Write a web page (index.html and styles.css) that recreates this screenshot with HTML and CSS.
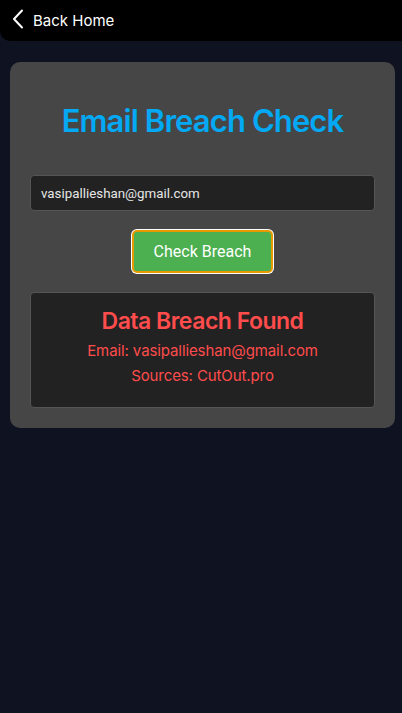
FILE: index.html
```html
<!DOCTYPE html>
<html lang="en">
<head>
<meta charset="utf-8">
<title>Email Breach Check</title>
<link rel="stylesheet" href="styles.css">
</head>
<body>
<header class="topbar">
  <a class="back" href="#">
    <svg class="chev" width="12" height="20" viewBox="0 0 12 20"><path d="M10 1.5 L2 10 L10 18.5" fill="none" stroke="#fff" stroke-width="2" stroke-linecap="round" stroke-linejoin="round"/></svg>
    <span>Back Home</span>
  </a>
</header>
<main class="card">
  <h1 class="title">Email Breach Check</h1>
  <input class="email" type="text" value="vasipallieshan@gmail.com">
  <div class="actions"><button class="check">Check Breach</button></div>
  <section class="result">
    <h2 class="result-title">Data Breach Found</h2>
    <p class="line">Email: vasipallieshan@gmail.com</p>
    <p class="line">Sources: CutOut.pro</p>
  </section>
</main>
</body>
</html>
```
FILE: styles.css
```css
html, body {
  margin: 0;
  padding: 0;
  background: #0f1321;
  height: 100%;
}
body {
  font-family: Inter, "Open Sans", sans-serif;
}
.topbar {
  background: #000;
  height: 41px;
  border-bottom-left-radius: 10px;
  display: flex;
  align-items: center;
  padding-left: 12px;
}
.back {
  display: flex;
  align-items: center;
  gap: 9px;
  color: #fff;
  text-decoration: none;
  font-size: 15px;
}
.chev { margin-top: -4px; }
.card {
  margin: 21px 7px 0 10px;
  background: #464646;
  border-radius: 10px;
  padding: 20px 20px 20px;
}
.title {
  margin: 19px 0 34px;
  text-align: center;
  color: #03a9f4;
  font-size: 31px;
  line-height: 40px;
  font-weight: 600;
  letter-spacing: -0.9px;
}
.email {
  display: block;
  box-sizing: border-box;
  width: 100%;
  height: 36px;
  background: #222;
  border: 1px solid #555;
  border-radius: 4px;
  color: #e6e6e6;
  font-family: Roboto, sans-serif;
  font-size: 13.33px;
  padding: 0 10px;
  outline: none;
}
.actions {
  display: flex;
  justify-content: center;
  margin: 19px 0;
}
.check {
  background: #4caf50;
  color: #fff;
  font-family: Roboto, sans-serif;
  font-size: 16px;
  line-height: 19px;
  padding: 10px 20px;
  border: 2px solid #e69a00;
  border-radius: 5px;
  box-shadow: 0 0 0 1px #fff;
}
.result {
  background: #222;
  border: 1px solid #555;
  border-radius: 4px;
  padding: 13px 10px 19px;
  text-align: center;
  color: #ff4c4c;
}
.result-title {
  margin: 0 0 2px;
  font-size: 23px;
  line-height: 30px;
  font-weight: 600;
  letter-spacing: -0.5px;
}
.line {
  margin: 0;
  font-size: 15px;
  line-height: 25px;
  letter-spacing: -0.1px;
}
```
